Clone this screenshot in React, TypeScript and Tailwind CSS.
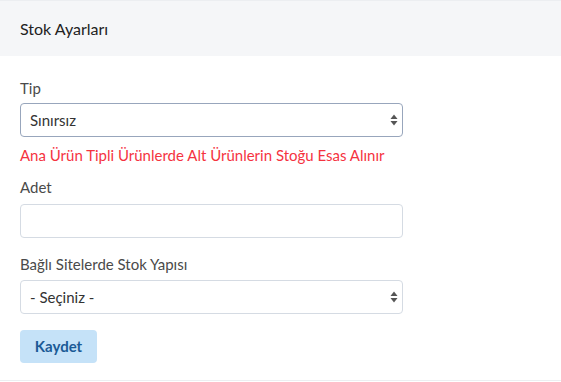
import { useState } from 'react';

function SelectArrows() {
  return (
    <svg
      className="pointer-events-none absolute right-[5px] top-1/2 -translate-y-1/2"
      width="8"
      height="12"
      viewBox="0 0 8 12"
    >
      <path d="M4 0.5 L7.5 5 L0.5 5 Z" fill="#555" />
      <path d="M4 11.5 L7.5 7 L0.5 7 Z" fill="#555" />
    </svg>
  );
}

export default function App() {
  const [tip, setTip] = useState('sinirsiz');
  const [adet, setAdet] = useState('');
  const [yapi, setYapi] = useState('');

  return (
    <div
      className="w-[561px] h-[382px] bg-white overflow-hidden"
      style={{ fontFamily: 'Lato, "Noto Sans", sans-serif' }}
    >
      <div className="border-t border-b border-[#eceef1] bg-white">
        <div className="h-[55px] bg-[#f5f6f8] flex items-center px-5">
          <span className="text-[16px] text-[#222]">Stok Ayarları</span>
        </div>

        <div className="px-5 pt-[22px] pb-[17px]">
          <div className="w-[383px]">
            <div className="mb-[12px]">
              <label className="block text-[15px] leading-5 text-[#4a4a4a] mb-[5px]">Tip</label>
              <div className="relative">
                <select
                  value={tip}
                  onChange={(e) => setTip(e.target.value)}
                  className="appearance-none w-full h-[34px] rounded-[4px] border border-[#98a6bc] bg-white pl-[9px] pr-6 text-[15px] text-[#333] outline-none"
                >
                  <option value="sinirsiz">Sınırsız</option>
                  <option value="sinirli">Sınırlı</option>
                </select>
                <SelectArrows />
              </div>
              <p className="mt-[8px] text-[15px] leading-5 text-[#f5333f] whitespace-nowrap">
                Ana Ürün Tipli Ürünlerde Alt Ürünlerin Stoğu Esas Alınır
              </p>
            </div>

            <div className="mb-[16px]">
              <label className="block text-[15px] leading-5 text-[#4a4a4a] mb-[7px]">Adet</label>
              <input
                type="text"
                value={adet}
                onChange={(e) => setAdet(e.target.value)}
                className="w-full h-[34px] rounded-[4px] border border-[#d5dbe3] bg-white px-[9px] text-[15px] text-[#333] outline-none"
              />
            </div>

            <div className="mb-[16px]">
              <label className="block text-[15px] leading-5 text-[#4a4a4a] mb-[6px]">
                Bağlı Sitelerde Stok Yapısı
              </label>
              <div className="relative">
                <select
                  value={yapi}
                  onChange={(e) => setYapi(e.target.value)}
                  className="appearance-none w-full h-[34px] rounded-[4px] border border-[#d5dbe3] bg-white pl-[9px] pr-6 text-[15px] text-[#333] outline-none"
                >
                  <option value="">- Seçiniz -</option>
                  <option value="ortak">Ortak Stok</option>
                  <option value="ayri">Ayrı Stok</option>
                </select>
                <SelectArrows />
              </div>
            </div>

            <button className="h-[33px] w-[77px] rounded-[4px] bg-[#c5e2f8] text-[15px] font-bold text-[#1b5a96]">
              Kaydet
            </button>
          </div>
        </div>
      </div>
    </div>
  );
}
